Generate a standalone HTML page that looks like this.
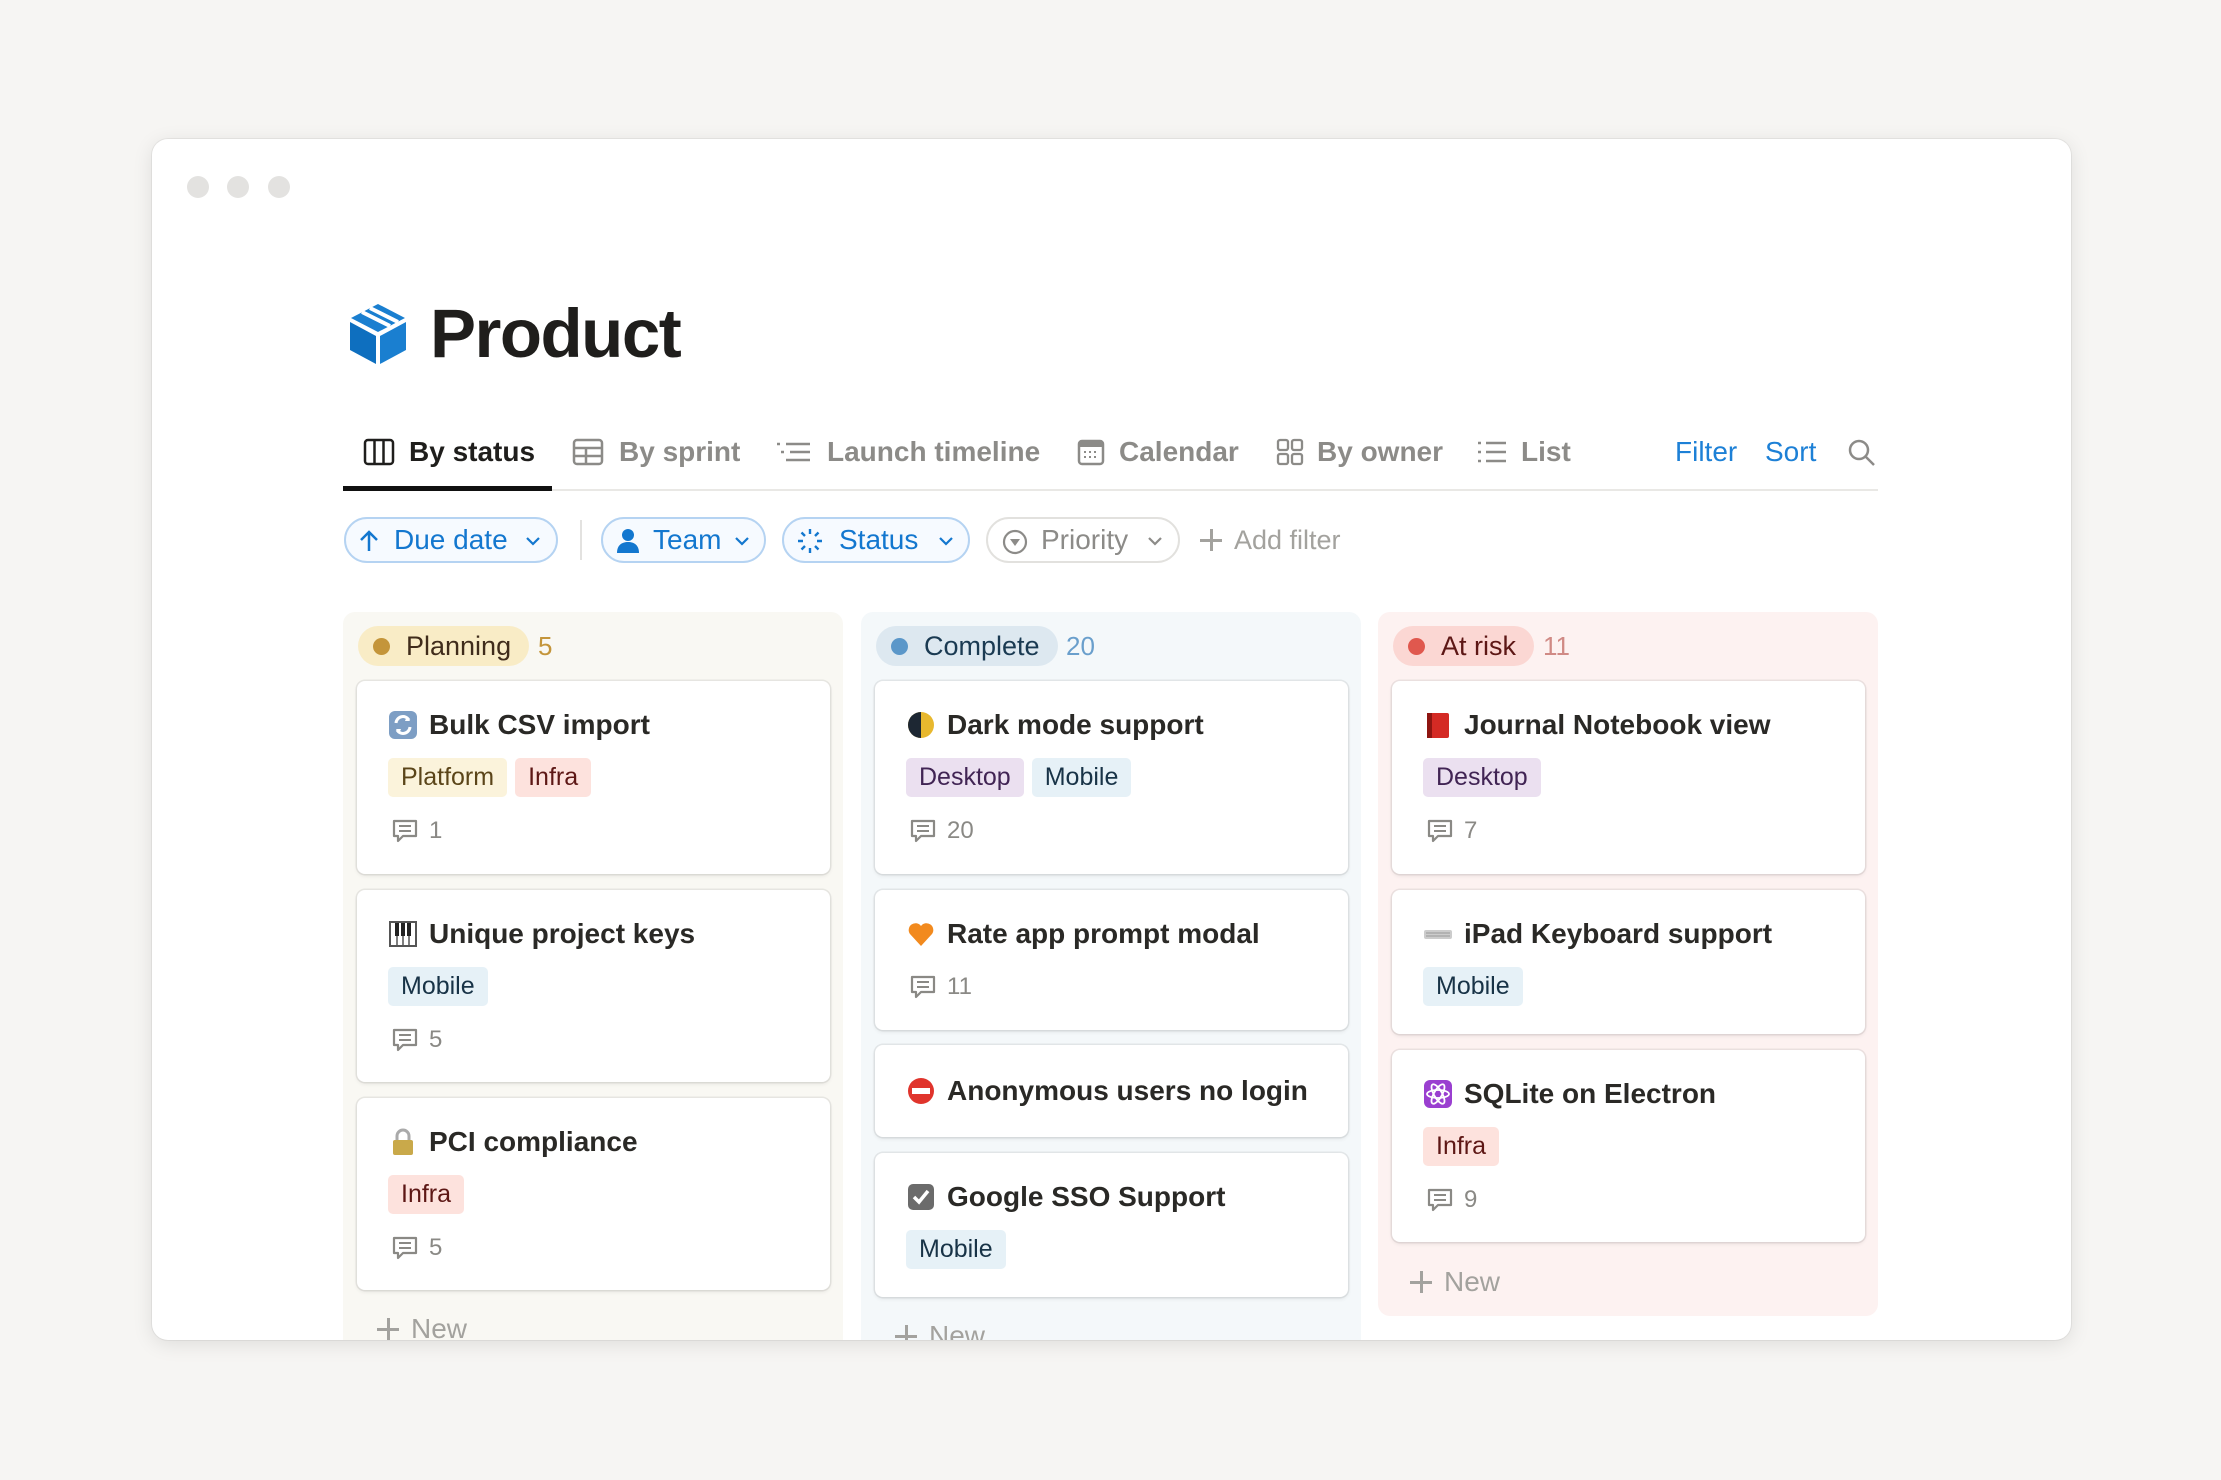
<!DOCTYPE html>
<html><head><meta charset="utf-8"><style>
*{box-sizing:border-box;margin:0;padding:0}
body{width:2221px;height:1480px;background:#f6f5f3;font-family:"Liberation Sans",sans-serif;position:relative;overflow:hidden}
.win{position:absolute;left:152px;top:139px;width:1919px;height:1201px;background:#fff;border-radius:16px;box-shadow:0 4px 20px rgba(0,0,0,.10),0 0 0 1px rgba(0,0,0,.05);overflow:hidden}
.dot{position:absolute;top:176px;width:22px;height:22px;border-radius:50%;background:#e3e2e0}
.a{position:absolute}
.tab{position:absolute;top:433px;font-size:28px;color:#8c8b88;font-weight:700;line-height:38px;white-space:nowrap}
.tab svg{position:absolute;top:5px}
.pill{position:absolute;top:517px;height:46px;border-radius:23px;border:2px solid #b5d3f2;background:#f6faff;color:#1377cf;font-size:28px;line-height:42px;white-space:nowrap}
.col{position:absolute;top:612px;width:500px;height:900px;border-radius:12px}
.hp{position:absolute;top:626px;height:40px;border-radius:20px;font-size:27px;line-height:40px;padding-left:48px;padding-right:18px;white-space:nowrap}
.hp i{position:absolute;left:15px;top:12px;width:17px;height:17px;border-radius:50%}
.cnt{position:absolute;top:626px;font-size:26px;line-height:40px}
.card{position:absolute;width:473px;background:#fff;border-radius:8px;box-shadow:0 0 0 1.5px rgba(15,15,15,.07),0 2px 4px rgba(15,15,15,.08)}
.t{position:absolute;left:72px;font-size:28px;font-weight:700;color:#2a2926;line-height:36px;white-space:nowrap}
.e{position:absolute;left:31px;width:30px;height:30px}
.tags{position:absolute;left:31px;top:77px;display:flex;gap:8px}
.tag{height:39px;border-radius:5px;padding:0 13px;font-size:25px;line-height:39px}
.cm{position:absolute;left:34px;font-size:24px;color:#8a8985;line-height:30px;padding-left:38px}
.cm svg{position:absolute;left:0;top:2px}
.pl{background:#fbf3db;color:#5b4519}.in{background:#fde2dd;color:#5d1715}.de{background:#ebe0f0;color:#412454}.mo{background:#e6f1f7;color:#183347}
.new{position:absolute;font-size:28px;color:#a3a29e;line-height:36px;padding-left:36px}
.new:before{content:"";position:absolute;left:2px;top:17px;width:22px;height:2.5px;background:#a3a29e}
.new:after{content:"";position:absolute;left:12px;top:7px;width:2.5px;height:22px;background:#a3a29e}
</style></head><body>
<div class="win">
<div class="dot" style="left:35px;top:37px"></div>
<div class="dot" style="left:75px;top:37px"></div>
<div class="dot" style="left:116px;top:37px"></div>
</div>
<svg class="a" style="left:348px;top:302px" width="60" height="64" viewBox="0 0 60 64">
<path d="M30 2 L57 16 L30 30 L3 16 Z" fill="#1a7fd0"/>
<path d="M14 10 L42 24 M22 6 L50 20" stroke="#fff" stroke-width="4"/>
<path d="M2 20 L28 34 L28 62 L2 48 Z" fill="#0e6fbf"/>
<path d="M58 20 L32 34 L32 62 L58 48 Z" fill="#1a7fd0"/>
</svg>
<div class="a" style="left:430px;top:294px;font-size:69px;font-weight:700;color:#1f1e1c;letter-spacing:-1.5px;line-height:80px">Product</div>

<div class="tab" style="left:363px;color:#1f1e1c"><svg width="32" height="28" viewBox="0 0 32 28" style="left:0"><rect x="2" y="2" width="28" height="24" rx="3" fill="none" stroke="#1f1e1c" stroke-width="2.5"/><path d="M11.5 2v24M20.5 2v24" stroke="#1f1e1c" stroke-width="2.5"/></svg><span style="margin-left:46px">By status</span></div>
<div class="tab" style="left:572px"><svg width="32" height="28" viewBox="0 0 32 28" style="left:0"><rect x="2" y="2" width="28" height="24" rx="3" fill="none" stroke="#8c8b88" stroke-width="2.5"/><path d="M2 10h28M2 18h28M14 10v16" stroke="#8c8b88" stroke-width="2.5"/></svg><span style="margin-left:47px">By sprint</span></div>
<div class="tab" style="left:776px"><svg width="36" height="28" viewBox="0 0 36 28" style="left:0"><path d="M1 6h3M10 6h24M5 14h3M14 14h20M10 22h24" stroke="#8c8b88" stroke-width="2.5"/></svg><span style="margin-left:51px">Launch timeline</span></div>
<div class="tab" style="left:1077px"><svg width="28" height="28" viewBox="0 0 28 28" style="left:0"><rect x="2" y="3" width="24" height="23" rx="3" fill="none" stroke="#8c8b88" stroke-width="2.5"/><rect x="2" y="3" width="24" height="6" fill="#8c8b88"/><path d="M7 14h2M12 14h2M17 14h2M7 19h2M12 19h2M17 19h2" stroke="#8c8b88" stroke-width="2"/></svg><span style="margin-left:42px">Calendar</span></div>
<div class="tab" style="left:1276px"><svg width="28" height="28" viewBox="0 0 28 28" style="left:0"><rect x="2" y="2" width="10" height="10" rx="2" fill="none" stroke="#8c8b88" stroke-width="2.3"/><rect x="16" y="2" width="10" height="10" rx="2" fill="none" stroke="#8c8b88" stroke-width="2.3"/><rect x="2" y="16" width="10" height="10" rx="2" fill="none" stroke="#8c8b88" stroke-width="2.3"/><rect x="16" y="16" width="10" height="10" rx="2" fill="none" stroke="#8c8b88" stroke-width="2.3"/></svg><span style="margin-left:41px">By owner</span></div>
<div class="tab" style="left:1477px"><svg width="30" height="28" viewBox="0 0 30 28" style="left:0"><path d="M1 5h3M9 5h20M1 14h3M9 14h20M1 23h3M9 23h20" stroke="#8c8b88" stroke-width="2.5"/></svg><span style="margin-left:44px">List</span></div>
<div class="tab" style="left:1675px;color:#1d80d6;font-weight:400">Filter</div>
<div class="tab" style="left:1765px;color:#1d80d6;font-weight:400">Sort</div>
<svg class="a" style="left:1847px;top:438px" width="30" height="30" viewBox="0 0 30 30"><circle cx="12" cy="12" r="9" fill="none" stroke="#8c8b88" stroke-width="2.5"/><path d="M19 19l8 8" stroke="#8c8b88" stroke-width="2.5"/></svg>
<div class="a" style="left:343px;top:489px;width:1535px;height:2px;background:#e9e8e5"></div>
<div class="a" style="left:343px;top:486px;width:209px;height:5px;background:#111"></div>

<div class="pill" style="left:344px;width:214px"><svg class="a" style="left:12px;top:10px" width="22" height="24" viewBox="0 0 22 24"><path d="M11 22V3M3 11l8-8 8 8" fill="none" stroke="#1377cf" stroke-width="2.5"/></svg><span style="position:absolute;left:48px">Due date</span><svg class="a" style="left:180px;top:18px" width="14" height="9" viewBox="0 0 14 9"><path d="M1 1l6 6 6-6" fill="none" stroke="#1377cf" stroke-width="2.2"/></svg></div>
<div class="a" style="left:580px;top:520px;width:2px;height:40px;background:#e3e2e0"></div>
<div class="pill" style="left:601px;width:165px"><svg class="a" style="left:13px;top:9px" width="24" height="26" viewBox="0 0 24 26"><circle cx="12" cy="7" r="6" fill="#1377cf"/><path d="M1 25c0-8 5-11 11-11s11 3 11 11z" fill="#1377cf"/></svg><span style="position:absolute;left:50px">Team</span><svg class="a" style="left:132px;top:18px" width="14" height="9" viewBox="0 0 14 9"><path d="M1 1l6 6 6-6" fill="none" stroke="#1377cf" stroke-width="2.2"/></svg></div>
<div class="pill" style="left:782px;width:188px"><svg class="a" style="left:12px;top:8px" width="28" height="28" viewBox="0 0 28 28" stroke="#1377cf" stroke-width="2.4"><path d="M14 2v5M14 21v5M2 14h5M21 14h5M5.5 5.5l3.5 3.5M19 19l3.5 3.5M5.5 22.5L9 19M19 9l3.5-3.5"/></svg><span style="position:absolute;left:55px">Status</span><svg class="a" style="left:155px;top:18px" width="14" height="9" viewBox="0 0 14 9"><path d="M1 1l6 6 6-6" fill="none" stroke="#1377cf" stroke-width="2.2"/></svg></div>
<div class="pill" style="left:986px;width:194px;border-color:#e2e1de;background:#fff;color:#8c8b88"><svg class="a" style="left:14px;top:10px" width="26" height="26" viewBox="0 0 26 26"><circle cx="13" cy="13" r="11" fill="none" stroke="#8c8b88" stroke-width="2.2"/><path d="M8 10h10l-5 7z" fill="#8c8b88"/></svg><span style="position:absolute;left:53px">Priority</span><svg class="a" style="left:160px;top:18px" width="14" height="9" viewBox="0 0 14 9"><path d="M1 1l6 6 6-6" fill="none" stroke="#8c8b88" stroke-width="2.2"/></svg></div>
<div class="new" style="left:1198px;top:522px;font-size:27px;color:#a3a29e">Add filter</div>

<div class="a" style="left:152px;top:139px;width:1919px;height:1201px;overflow:hidden;border-radius:16px">
<div style="position:absolute;left:-152px;top:-139px;width:2221px;height:1480px">
<div class="col" style="left:343px;background:#f9f8f3"></div>
<div class="col" style="left:861px;background:#f4f8fa"></div>
<div class="col" style="left:1378px;height:704px;background:#fdf2f1"></div>

<div class="hp" style="left:358px;background:#f9ecc6;color:#402c1b"><i style="background:#c4953a"></i>Planning</div>
<div class="cnt" style="left:538px;color:#c4953a">5</div>
<div class="hp" style="left:876px;background:#dde8f0;color:#1a3a52"><i style="background:#5b97c9"></i>Complete</div>
<div class="cnt" style="left:1066px;color:#6a9fcc">20</div>
<div class="hp" style="left:1393px;background:#fbd7d3;color:#5d1715"><i style="background:#e0584e"></i>At risk</div>
<div class="cnt" style="left:1543px;color:#d08a85">11</div>

<div class="card" style="left:357px;top:681px;height:193px">
<svg class="e" style="top:29px" viewBox="0 0 30 30"><rect x="1" y="1" width="28" height="28" rx="6" fill="#7d9ec4"/><path d="M8 13a7 7 0 0 1 13-3M22 17a7 7 0 0 1-13 3" fill="none" stroke="#fff" stroke-width="3"/><path d="M19 6l3 5-5 0zM11 24l-3-5 5 0z" fill="#fff"/></svg>
<div class="t" style="top:26px">Bulk CSV import</div>
<div class="tags"><div class="tag pl">Platform</div><div class="tag in">Infra</div></div>
<div class="cm" style="top:135px"><svg width="28" height="28" viewBox="0 0 28 28"><path d="M3 3h22v15H12l-5 5v-5H3z" fill="none" stroke="#8a8985" stroke-width="2.2" stroke-linejoin="round"/><path d="M8 8h12M8 13h12" stroke="#8a8985" stroke-width="2"/></svg>1</div>
</div>
<div class="card" style="left:357px;top:890px;height:192px">
<svg class="e" style="top:29px" viewBox="0 0 30 30"><rect x="2" y="3" width="26" height="24" fill="#fff" stroke="#555" stroke-width="2"/><path d="M9 4v22M15 4v22M21 4v22" stroke="#555" stroke-width="1.5"/><path d="M7 4h4v13H7zM13 4h4v13h-4zM19 4h4v13h-4z" fill="#222"/></svg>
<div class="t" style="top:26px">Unique project keys</div>
<div class="tags"><div class="tag mo">Mobile</div></div>
<div class="cm" style="top:135px"><svg width="28" height="28" viewBox="0 0 28 28"><path d="M3 3h22v15H12l-5 5v-5H3z" fill="none" stroke="#8a8985" stroke-width="2.2" stroke-linejoin="round"/><path d="M8 8h12M8 13h12" stroke="#8a8985" stroke-width="2"/></svg>5</div>
</div>
<div class="card" style="left:357px;top:1098px;height:192px">
<svg class="e" style="top:29px" viewBox="0 0 30 30"><path d="M9 14V9a6 6 0 0 1 12 0v5" fill="none" stroke="#aaa" stroke-width="3"/><rect x="5" y="13" width="20" height="15" rx="2" fill="#c9a94a"/></svg>
<div class="t" style="top:26px">PCI compliance</div>
<div class="tags"><div class="tag in">Infra</div></div>
<div class="cm" style="top:135px"><svg width="28" height="28" viewBox="0 0 28 28"><path d="M3 3h22v15H12l-5 5v-5H3z" fill="none" stroke="#8a8985" stroke-width="2.2" stroke-linejoin="round"/><path d="M8 8h12M8 13h12" stroke="#8a8985" stroke-width="2"/></svg>5</div>
</div>
<div class="new" style="left:375px;top:1311px">New</div>

<div class="card" style="left:875px;top:681px;height:193px">
<svg class="e" style="top:29px" viewBox="0 0 30 30"><circle cx="15" cy="15" r="13" fill="#e8b82e"/><path d="M15 2a13 13 0 0 0 0 26z" fill="#1d2733"/></svg>
<div class="t" style="top:26px">Dark mode support</div>
<div class="tags"><div class="tag de">Desktop</div><div class="tag mo">Mobile</div></div>
<div class="cm" style="top:135px"><svg width="28" height="28" viewBox="0 0 28 28"><path d="M3 3h22v15H12l-5 5v-5H3z" fill="none" stroke="#8a8985" stroke-width="2.2" stroke-linejoin="round"/><path d="M8 8h12M8 13h12" stroke="#8a8985" stroke-width="2"/></svg>20</div>
</div>
<div class="card" style="left:875px;top:890px;height:140px">
<svg class="e" style="top:29px" viewBox="0 0 30 30"><path d="M15 27L4 15a6.5 6.5 0 0 1 11-8 6.5 6.5 0 0 1 11 8z" fill="#f28a1e"/></svg>
<div class="t" style="top:26px">Rate app prompt modal</div>
<div class="cm" style="top:82px"><svg width="28" height="28" viewBox="0 0 28 28"><path d="M3 3h22v15H12l-5 5v-5H3z" fill="none" stroke="#8a8985" stroke-width="2.2" stroke-linejoin="round"/><path d="M8 8h12M8 13h12" stroke="#8a8985" stroke-width="2"/></svg>11</div>
</div>
<div class="card" style="left:875px;top:1045px;height:92px">
<svg class="e" style="top:31px" viewBox="0 0 30 30"><circle cx="15" cy="15" r="13" fill="#e0342c"/><rect x="6" y="12" width="18" height="6" fill="#fff"/></svg>
<div class="t" style="top:28px">Anonymous users no login</div>
</div>
<div class="card" style="left:875px;top:1153px;height:144px">
<svg class="e" style="top:29px" viewBox="0 0 30 30"><rect x="2" y="2" width="26" height="26" rx="5" fill="#6b6b6b"/><path d="M8 15l5 5 9-11" fill="none" stroke="#fff" stroke-width="3.5"/></svg>
<div class="t" style="top:26px">Google SSO Support</div>
<div class="tags"><div class="tag mo">Mobile</div></div>
</div>
<div class="new" style="left:893px;top:1318px">New</div>

<div class="card" style="left:1392px;top:681px;height:193px">
<svg class="e" style="top:29px" viewBox="0 0 30 30"><rect x="4" y="3" width="22" height="25" rx="2" fill="#d42a24"/><rect x="4" y="3" width="5" height="25" fill="#8e1511"/></svg>
<div class="t" style="top:26px">Journal Notebook view</div>
<div class="tags"><div class="tag de">Desktop</div></div>
<div class="cm" style="top:135px"><svg width="28" height="28" viewBox="0 0 28 28"><path d="M3 3h22v15H12l-5 5v-5H3z" fill="none" stroke="#8a8985" stroke-width="2.2" stroke-linejoin="round"/><path d="M8 8h12M8 13h12" stroke="#8a8985" stroke-width="2"/></svg>7</div>
</div>
<div class="card" style="left:1392px;top:890px;height:144px">
<svg class="e" style="top:29px" viewBox="0 0 30 30"><rect x="1" y="11" width="28" height="9" rx="2" fill="#ccc"/><path d="M3 14h24M3 17h24" stroke="#999" stroke-width="1"/></svg>
<div class="t" style="top:26px">iPad Keyboard support</div>
<div class="tags"><div class="tag mo">Mobile</div></div>
</div>
<div class="card" style="left:1392px;top:1050px;height:192px">
<svg class="e" style="top:29px" viewBox="0 0 30 30"><rect x="1" y="1" width="28" height="28" rx="6" fill="#9a3fd0"/><g fill="none" stroke="#fff" stroke-width="1.8"><ellipse cx="15" cy="15" rx="11" ry="4"/><ellipse cx="15" cy="15" rx="11" ry="4" transform="rotate(60 15 15)"/><ellipse cx="15" cy="15" rx="11" ry="4" transform="rotate(-60 15 15)"/></g></svg>
<div class="t" style="top:26px">SQLite on Electron</div>
<div class="tags"><div class="tag in">Infra</div></div>
<div class="cm" style="top:135px"><svg width="28" height="28" viewBox="0 0 28 28"><path d="M3 3h22v15H12l-5 5v-5H3z" fill="none" stroke="#8a8985" stroke-width="2.2" stroke-linejoin="round"/><path d="M8 8h12M8 13h12" stroke="#8a8985" stroke-width="2"/></svg>9</div>
</div>
<div class="new" style="left:1408px;top:1264px">New</div>
</div>
</div>
</body></html>
